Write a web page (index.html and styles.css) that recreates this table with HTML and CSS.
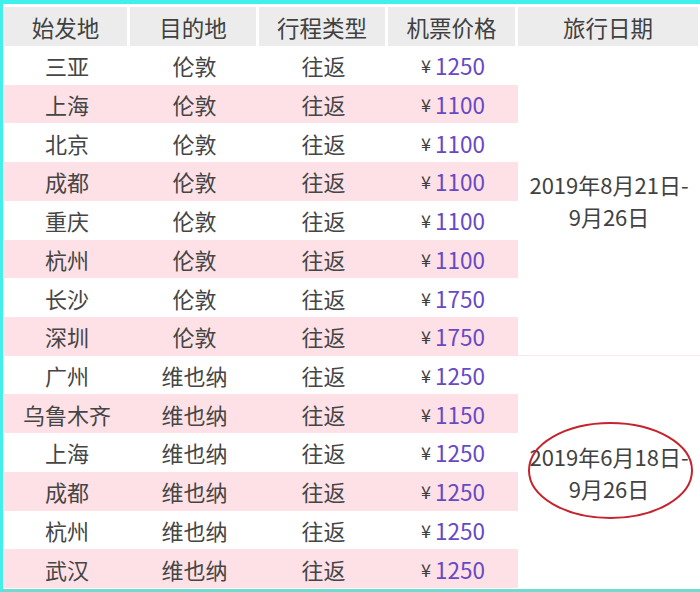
FILE: index.html
```html
<!DOCTYPE html>
<html lang="zh-CN">
<head>
<meta charset="utf-8">
<title>机票价格</title>
<link rel="stylesheet" href="styles.css">
</head>
<body>
<div class="frame">
  <div class="grid">
    <div class="th">始发地</div>
    <div class="th">目的地</div>
    <div class="th">行程类型</div>
    <div class="th">机票价格</div>
    <div class="th last">旅行日期</div>

    <div class="date g1">2019年8月21日-<br>9月26日</div>
    <div class="date g2">2019年6月18日-<br>9月26日</div>

    <div class="td">三亚</div><div class="td">伦敦</div><div class="td">往返</div><div class="td"><span class="yen">¥</span><span class="num">1250</span></div>
    <div class="td alt">上海</div><div class="td alt">伦敦</div><div class="td alt">往返</div><div class="td alt"><span class="yen">¥</span><span class="num">1100</span></div>
    <div class="td">北京</div><div class="td">伦敦</div><div class="td">往返</div><div class="td"><span class="yen">¥</span><span class="num">1100</span></div>
    <div class="td alt">成都</div><div class="td alt">伦敦</div><div class="td alt">往返</div><div class="td alt"><span class="yen">¥</span><span class="num">1100</span></div>
    <div class="td">重庆</div><div class="td">伦敦</div><div class="td">往返</div><div class="td"><span class="yen">¥</span><span class="num">1100</span></div>
    <div class="td alt">杭州</div><div class="td alt">伦敦</div><div class="td alt">往返</div><div class="td alt"><span class="yen">¥</span><span class="num">1100</span></div>
    <div class="td">长沙</div><div class="td">伦敦</div><div class="td">往返</div><div class="td"><span class="yen">¥</span><span class="num">1750</span></div>
    <div class="td alt">深圳</div><div class="td alt">伦敦</div><div class="td alt">往返</div><div class="td alt"><span class="yen">¥</span><span class="num">1750</span></div>
    <div class="td">广州</div><div class="td">维也纳</div><div class="td">往返</div><div class="td"><span class="yen">¥</span><span class="num">1250</span></div>
    <div class="td alt">乌鲁木齐</div><div class="td alt">维也纳</div><div class="td alt">往返</div><div class="td alt"><span class="yen">¥</span><span class="num">1150</span></div>
    <div class="td">上海</div><div class="td">维也纳</div><div class="td">往返</div><div class="td"><span class="yen">¥</span><span class="num">1250</span></div>
    <div class="td alt">成都</div><div class="td alt">维也纳</div><div class="td alt">往返</div><div class="td alt"><span class="yen">¥</span><span class="num">1250</span></div>
    <div class="td">杭州</div><div class="td">维也纳</div><div class="td">往返</div><div class="td"><span class="yen">¥</span><span class="num">1250</span></div>
    <div class="td alt">武汉</div><div class="td alt">维也纳</div><div class="td alt">往返</div><div class="td alt"><span class="yen">¥</span><span class="num">1250</span></div>
  </div>
  <svg class="circle" width="165" height="97" viewBox="0 0 165 97">
    <ellipse cx="82.5" cy="48.5" rx="81.5" ry="47.5" fill="none" stroke="#c5232d" stroke-width="2"/>
  </svg>
</div>
</body>
</html>
```

FILE: styles.css
```css
html, body {
  margin: 0;
  padding: 0;
  background: #ffffff;
}

.frame {
  position: relative;
  width: 700px;
  height: 592px;
  box-sizing: border-box;
  border-top: 4px solid #3ff1ea;
  border-left: 3px solid #3ff1ea;
  border-bottom: 3px solid #72dbd0;
  padding: 3px 0 1px 1px;
  background: #ffffff;
  font-family: "Noto Sans CJK SC", "Microsoft YaHei", sans-serif;
  color: #454545;
  overflow: hidden;
}

.grid {
  display: grid;
  grid-template-columns: 126px 129px 129px 130px 1fr;
  grid-template-rows: 39px repeat(14, 1fr);
  height: 581px;
}

.th {
  display: flex;
  align-items: center;
  justify-content: center;
  background: #ececec;
  background-clip: padding-box;
  border-right: 3px solid #ffffff;
  font-size: 22.5px;
  color: #404040;
}

.th.last {
  border-right: 2px solid #ffffff;
}

.td {
  display: flex;
  align-items: center;
  justify-content: center;
  font-size: 22px;
  background: #ffffff;
}

.td.alt {
  background: #fde1e6;
}

.yen {
  font-size: 18px;
  color: #3f3f3f;
  margin-right: 4px;
}

.num {
  color: #6849c4;
  font-size: 22.5px;
}

.date {
  grid-column: 5;
  display: flex;
  align-items: center;
  justify-content: center;
  text-align: center;
  font-size: 22px;
  line-height: 32px;
  color: #424242;
}

.g1 {
  grid-row: 2 / span 8;
  border-bottom: 1px solid #fbe6eb;
}

.g2 {
  grid-row: 10 / span 6;
}

.circle {
  position: absolute;
  left: 525px;
  top: 418px;
}
```
